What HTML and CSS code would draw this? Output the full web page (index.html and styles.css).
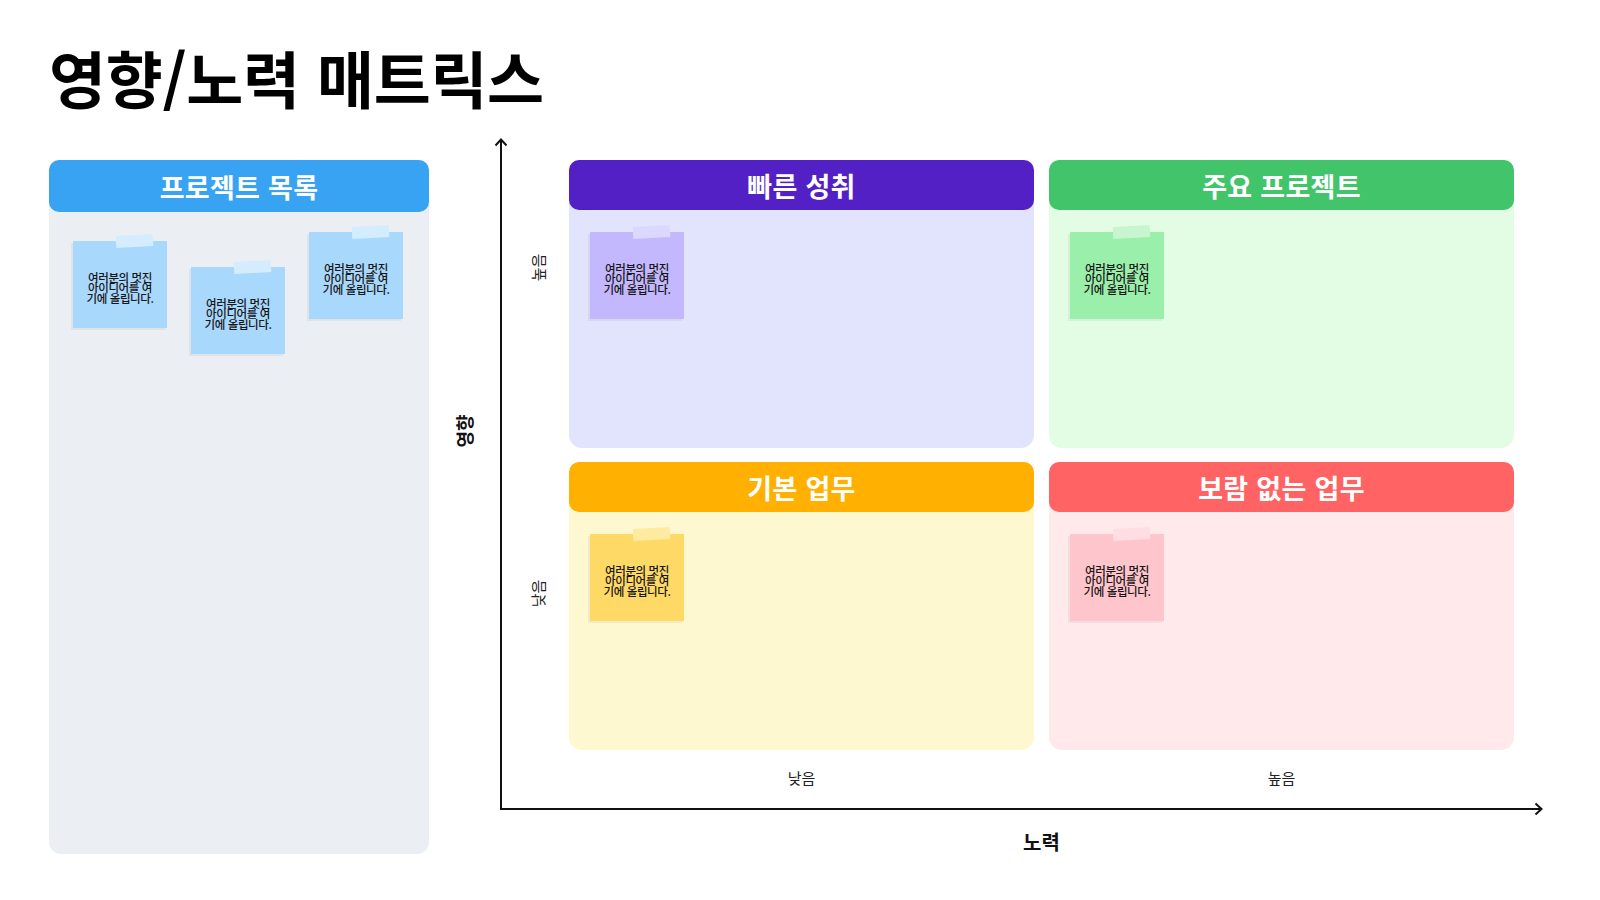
FILE: index.html
```html
<!DOCTYPE html>
<html lang="ko">
<head>
<meta charset="utf-8">
<title>영향/노력 매트릭스</title>
<link rel="stylesheet" href="styles.css">
</head>
<body>
<div class="page">
  <h1 class="title">영향/노력 매트릭스</h1>
  <div class="board">
    <section class="panel">
      <div class="head head-blue">프로젝트 목록</div>
      <div class="panel-body">
        <div class="note note-blue n1"><p>여러분의 멋진 아이디어를 여기에 올립니다.</p></div>
        <div class="note note-blue n2"><p>여러분의 멋진 아이디어를 여기에 올립니다.</p></div>
        <div class="note note-blue n3"><p>여러분의 멋진 아이디어를 여기에 올립니다.</p></div>
      </div>
    </section>

    <div class="chart">
      <div class="chart-main">
        <div class="y-title"><span class="rot bold">영향</span></div>
        <div class="plot">
          <div class="y-label y-high"><span class="rot">높음</span></div>
          <section class="quad q-purple">
            <div class="head">빠른 성취</div>
            <div class="quad-body"><div class="note"><p>여러분의 멋진 아이디어를 여기에 올립니다.</p></div></div>
          </section>
          <section class="quad q-green">
            <div class="head">주요 프로젝트</div>
            <div class="quad-body"><div class="note"><p>여러분의 멋진 아이디어를 여기에 올립니다.</p></div></div>
          </section>
          <div class="y-label y-low"><span class="rot">낮음</span></div>
          <section class="quad q-orange">
            <div class="head">기본 업무</div>
            <div class="quad-body"><div class="note"><p>여러분의 멋진 아이디어를 여기에 올립니다.</p></div></div>
          </section>
          <section class="quad q-red">
            <div class="head">보람 없는 업무</div>
            <div class="quad-body"><div class="note"><p>여러분의 멋진 아이디어를 여기에 올립니다.</p></div></div>
          </section>
          <div class="x-spacer"></div>
          <div class="x-label">낮음</div>
          <div class="x-label">높음</div>
          <svg class="arrow arrow-up" width="16" height="24" viewBox="0 0 16 24"><path d="M8 1 L8 24 M2.5 7.5 L8 1.5 L13.5 7.5" fill="none" stroke="#111" stroke-width="2"/></svg>
          <svg class="arrow arrow-right" width="14" height="16" viewBox="0 0 14 16"><path d="M0 8 L12.5 8 M6.5 2.5 L12.5 8 L6.5 13.5" fill="none" stroke="#111" stroke-width="2"/></svg>
        </div>
      </div>
      <div class="x-title">노력</div>
    </div>
  </div>
</div>
</body>
</html>
```

FILE: styles.css
```css
* { box-sizing: border-box; }
html, body { margin: 0; padding: 0; background: #ffffff; }
body {
  font-family: "Noto Sans CJK KR", "Noto Sans", sans-serif;
  color: #111;
  width: 1600px;
  height: 900px;
  overflow: hidden;
}
.page { padding: 40px 0 0 49px; }
.title {
  margin: 0;
  font-size: 62px;
  line-height: 74px;
  height: 74px;
  font-weight: 700;
  letter-spacing: -0.3px;
  color: #000;
}
.board {
  margin-top: 46px;
  display: flex;
  align-items: flex-start;
}
.head {
  height: 50px;
  border-radius: 10px;
  color: #fff;
  font-weight: 700;
  font-size: 27px;
  display: flex;
  align-items: center;
  justify-content: center;
  letter-spacing: 0.3px;
}
.head-blue { background: #38a3f3; height: 52px; }
.panel {
  width: 380px;
  height: 694px;
  background: #ebeff3;
  border-radius: 12px;
  display: flex;
  flex-direction: column;
}
.panel-body {
  display: flex;
  gap: 24px;
  padding: 0 24px;
  align-items: flex-start;
}
.n1 { margin-top: 29px; }
.n2 { margin-top: 55px; }
.n3 { margin-top: 20px; }

/* sticky note */
.note {
  position: relative;
  width: 94px;
  height: 87px;
  flex: none;
  display: flex;
  align-items: center;
  justify-content: center;
  background: var(--note);
  box-shadow: -2px 2px 0 rgba(0,0,0,0.05);
}
.note::before {
  content: "";
  position: absolute;
  left: 43px;
  top: -6px;
  width: 37px;
  height: 12px;
  background: var(--tape);
  transform: rotate(-3deg);
}
.note p {
  margin: 6px 0 0;
  width: 70px;
  font-size: 11.5px;
  font-weight: 500;
  line-height: 10.5px;
  text-align: center;
  color: #161616;
  letter-spacing: -0.4px;
  word-break: break-all;
}
.note-blue { --note: #a9d8fd; --tape: #d4edfe; }

/* chart */
.chart { display: flex; flex-direction: column; }
.chart-main { display: flex; }
.y-title {
  width: 71px;
  display: flex;
  align-items: center;
  justify-content: center;
  padding-bottom: 108px;
  padding-right: 2px;
}
.rot {
  display: inline-block;
  transform: rotate(-90deg);
  white-space: nowrap;
}
.bold { font-weight: 700; font-size: 18px; }
.plot {
  position: relative;
  border-left: 2px solid #111;
  border-bottom: 2px solid #111;
  display: grid;
  grid-template-columns: 52px 465px 465px;
  grid-template-rows: 288px 288px 44px;
  column-gap: 15px;
  row-gap: 14px;
  padding-right: 17px;
}
.plot .x-spacer { grid-column: 1; }
.y-label {
  display: flex;
  justify-content: center;
  align-items: flex-start;
  padding-left: 19px;
  font-size: 15px;
  color: #222;
}
.y-high { padding-top: 97px; }
.y-low { padding-top: 121px; }
.x-label {
  align-self: start;
  margin-top: 3px;
  line-height: 22px;
  text-align: center;
  font-size: 15px;
  color: #222;
}
.arrow { position: absolute; }
.arrow-up { left: -9px; top: -22px; }
.arrow-right { right: -12px; bottom: -9px; }
.x-title {
  margin-left: 140px;
  width: 945px;
  text-align: center;
  font-weight: 700;
  font-size: 20px;
  margin-top: 17px;
  line-height: 30px;
}

.quad {
  border-radius: 13px;
  display: flex;
  flex-direction: column;
  background: var(--bg);
}
.quad .head { background: var(--hd); }
.quad-body { padding: 22px 21px; }
.q-purple { --bg: #e2e4fe; --hd: #5320c5; --note: #c3b8fd; --tape: #dbd7fe; }
.q-green  { --bg: #e3fde5; --hd: #42c46a; --note: #9aefaa; --tape: #c8f5d0; }
.q-orange { --bg: #fef8d0; --hd: #ffb000; --note: #ffd966; --tape: #ffeaa2; }
.q-red    { --bg: #ffe9eb; --hd: #ff6363; --note: #ffc5cc; --tape: #ffdde3; }
```
